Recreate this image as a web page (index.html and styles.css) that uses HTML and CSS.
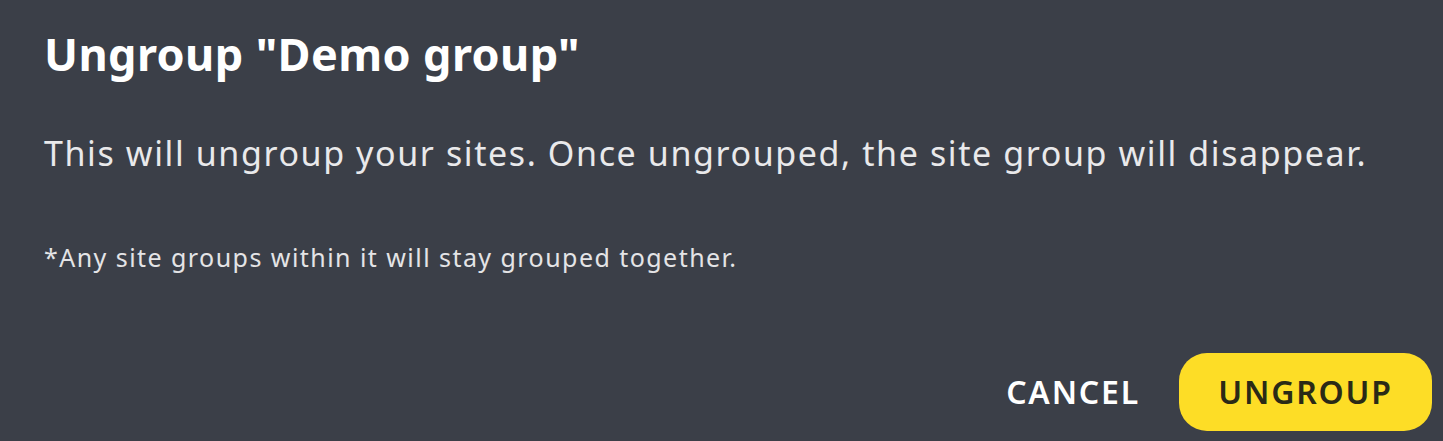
FILE: index.html
```html
<!DOCTYPE html>
<html lang="en">
<head>
<meta charset="utf-8">
<title>Ungroup</title>
<link rel="stylesheet" href="styles.css">
</head>
<body>
<div class="dialog">
  <h2 class="dialog-title">Ungroup "Demo group"</h2>
  <p class="dialog-text">This will ungroup your sites. Once ungrouped, the site group will disappear.</p>
  <p class="dialog-note">*Any site groups within it will stay grouped together.</p>
  <div class="dialog-actions">
    <button class="btn btn-text">CANCEL</button>
    <button class="btn btn-primary">UNGROUP</button>
  </div>
</div>
</body>
</html>
```

FILE: styles.css
```css
html, body {
  margin: 0;
  padding: 0;
  background: #3b3f48;
}
.dialog {
  box-sizing: border-box;
  width: 1443px;
  height: 441px;
  padding: 27px 11px 0 44px;
  font-family: "Noto Sans", "Open Sans", sans-serif;
  color: #ffffff;
}
.dialog-title {
  margin: 0;
  font-size: 45px;
  font-weight: 700;
  line-height: 1.2;
  letter-spacing: 0.4px;
}
.dialog-text {
  margin: 52px 0 0;
  font-size: 34px;
  line-height: 1.2;
  letter-spacing: 1.6px;
  color: #e9e9eb;
}
.dialog-note {
  margin: 68px 0 0;
  font-size: 25px;
  line-height: 1.2;
  letter-spacing: 1.45px;
  color: #e4e4e6;
}
.dialog-actions {
  margin-top: 81px;
  display: flex;
  justify-content: flex-end;
  align-items: center;
  gap: 39px;
}
.btn {
  font-family: "Noto Sans", "Open Sans", sans-serif;
  font-size: 32px;
  font-weight: 600;
  letter-spacing: 1.8px;
  border: none;
  height: 78px;
  border-radius: 28px;
  padding: 0;
  cursor: pointer;
}
.btn-text {
  background: transparent;
  color: #ffffff;
}
.btn-primary {
  width: 253px;
  background: #fddd26;
  color: #2a2a16;
}
```
